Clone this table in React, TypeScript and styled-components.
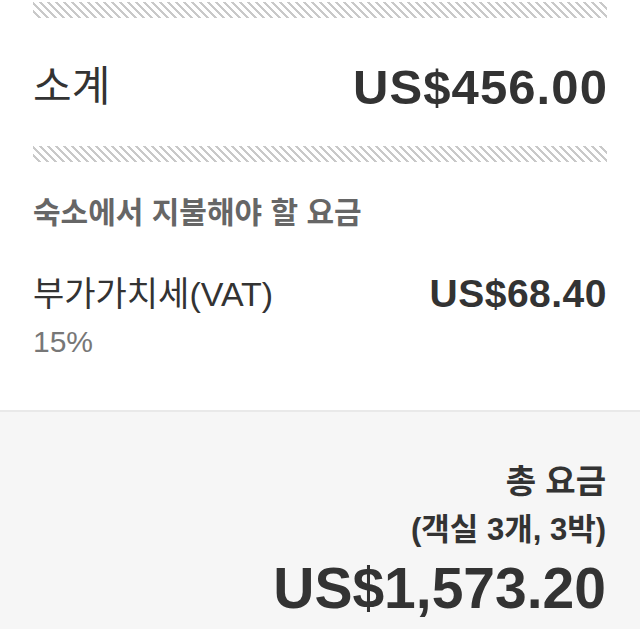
import React from "react";
import styled, { createGlobalStyle } from "styled-components";

const Global = createGlobalStyle`
  html, body { margin: 0; padding: 0; background: #ffffff; }
  body { font-family: "Liberation Sans", "Noto Sans CJK KR", sans-serif; color: #333333; }
`;

const Page = styled.div`
  width: 640px;
  height: 629px;
  overflow: hidden;
  display: flex;
  flex-direction: column;
  background: #ffffff;
`;

const Top = styled.div`
  padding: 2px 33px 0 33px;
  display: flex;
  flex-direction: column;
`;

const Hatch = styled.div`
  height: 16px;
  background: repeating-linear-gradient(
    45deg,
    #ffffff 0px,
    #ffffff 4px,
    #c9c9c9 4px,
    #c9c9c9 5.66px
  );
`;

const Row = styled.div<{ $h: number }>`
  height: ${(p) => p.$h}px;
  padding-top: 10px;
  box-sizing: border-box;
  display: flex;
  align-items: center;
  justify-content: space-between;
`;

const KoLabel = styled.span<{ $size: number }>`
  font-family: "Liberation Sans", "Noto Sans CJK KR", sans-serif;
  font-size: ${(p) => p.$size}px;
  font-weight: 400;
  color: #333333;
  line-height: 1;
`;

const Amount = styled.span<{ $size: number }>`
  font-family: "Liberation Sans", "Noto Sans CJK KR", sans-serif;
  font-weight: 700;
  font-size: ${(p) => p.$size}px;
  letter-spacing: 1.1px;
  margin-right: -1px;
  color: #333333;
  line-height: 1;
`;

const SectionTitle = styled.div`
  margin-top: 33px;
  font-family: "Liberation Sans", "Noto Sans CJK KR", sans-serif;
  font-weight: 700;
  font-size: 30px;
  line-height: 36px;
  color: #666666;
`;

const FeeBlock = styled.div`
  margin-top: 44px;
  display: flex;
  justify-content: space-between;
  align-items: flex-start;
`;

const FeeLeft = styled.div`
  display: flex;
  flex-direction: column;
`;

const FeeName = styled.span`
  font-family: "Liberation Sans", "Noto Sans CJK KR", sans-serif;
  font-size: 34px;
  line-height: 38px;
  color: #333333;
`;

const FeeRate = styled.span`
  margin-top: 12px;
  font-family: "Liberation Sans", sans-serif;
  font-size: 30px;
  line-height: 34px;
  color: #777777;
`;

const FeeAmount = styled.span`
  font-family: "Liberation Sans", sans-serif;
  font-weight: 700;
  font-size: 39px;
  letter-spacing: 0.5px;
  line-height: 38px;
  color: #333333;
`;

const Footer = styled.div`
  margin-top: auto;
  height: 219px;
  box-sizing: border-box;
  border-top: 2px solid #e9e9e9;
  background: #f6f6f6;
  padding: 51px 34px 0 33px;
  display: flex;
  flex-direction: column;
  align-items: flex-end;
`;

const TotalLabel = styled.span`
  font-family: "Liberation Sans", "Noto Sans CJK KR", sans-serif;
  font-weight: 700;
  font-size: 33px;
  line-height: 38px;
  color: #333333;
`;

const TotalSub = styled.span`
  margin-top: 11px;
  font-family: "Liberation Sans", "Noto Sans CJK KR", sans-serif;
  font-weight: 700;
  font-size: 31px;
  line-height: 36px;
  color: #333333;
`;

const TotalAmount = styled.span`
  margin-top: 8px;
  font-family: "Liberation Sans", sans-serif;
  font-weight: 700;
  font-size: 57px;
  line-height: 64px;
  color: #333333;
`;

export default function App() {
  return (
    <>
      <Global />
      <Page>
        <Top>
          <Hatch />
          <Row $h={128}>
            <KoLabel $size={42}>소계</KoLabel>
            <Amount $size={49}>US$456.00</Amount>
          </Row>
          <Hatch />
          <SectionTitle>숙소에서 지불해야 할 요금</SectionTitle>
          <FeeBlock>
            <FeeLeft>
              <FeeName>부가가치세(VAT)</FeeName>
              <FeeRate>15%</FeeRate>
            </FeeLeft>
            <FeeAmount>US$68.40</FeeAmount>
          </FeeBlock>
        </Top>
        <Footer>
          <TotalLabel>총 요금</TotalLabel>
          <TotalSub>(객실 3개, 3박)</TotalSub>
          <TotalAmount>US$1,573.20</TotalAmount>
        </Footer>
      </Page>
    </>
  );
}
